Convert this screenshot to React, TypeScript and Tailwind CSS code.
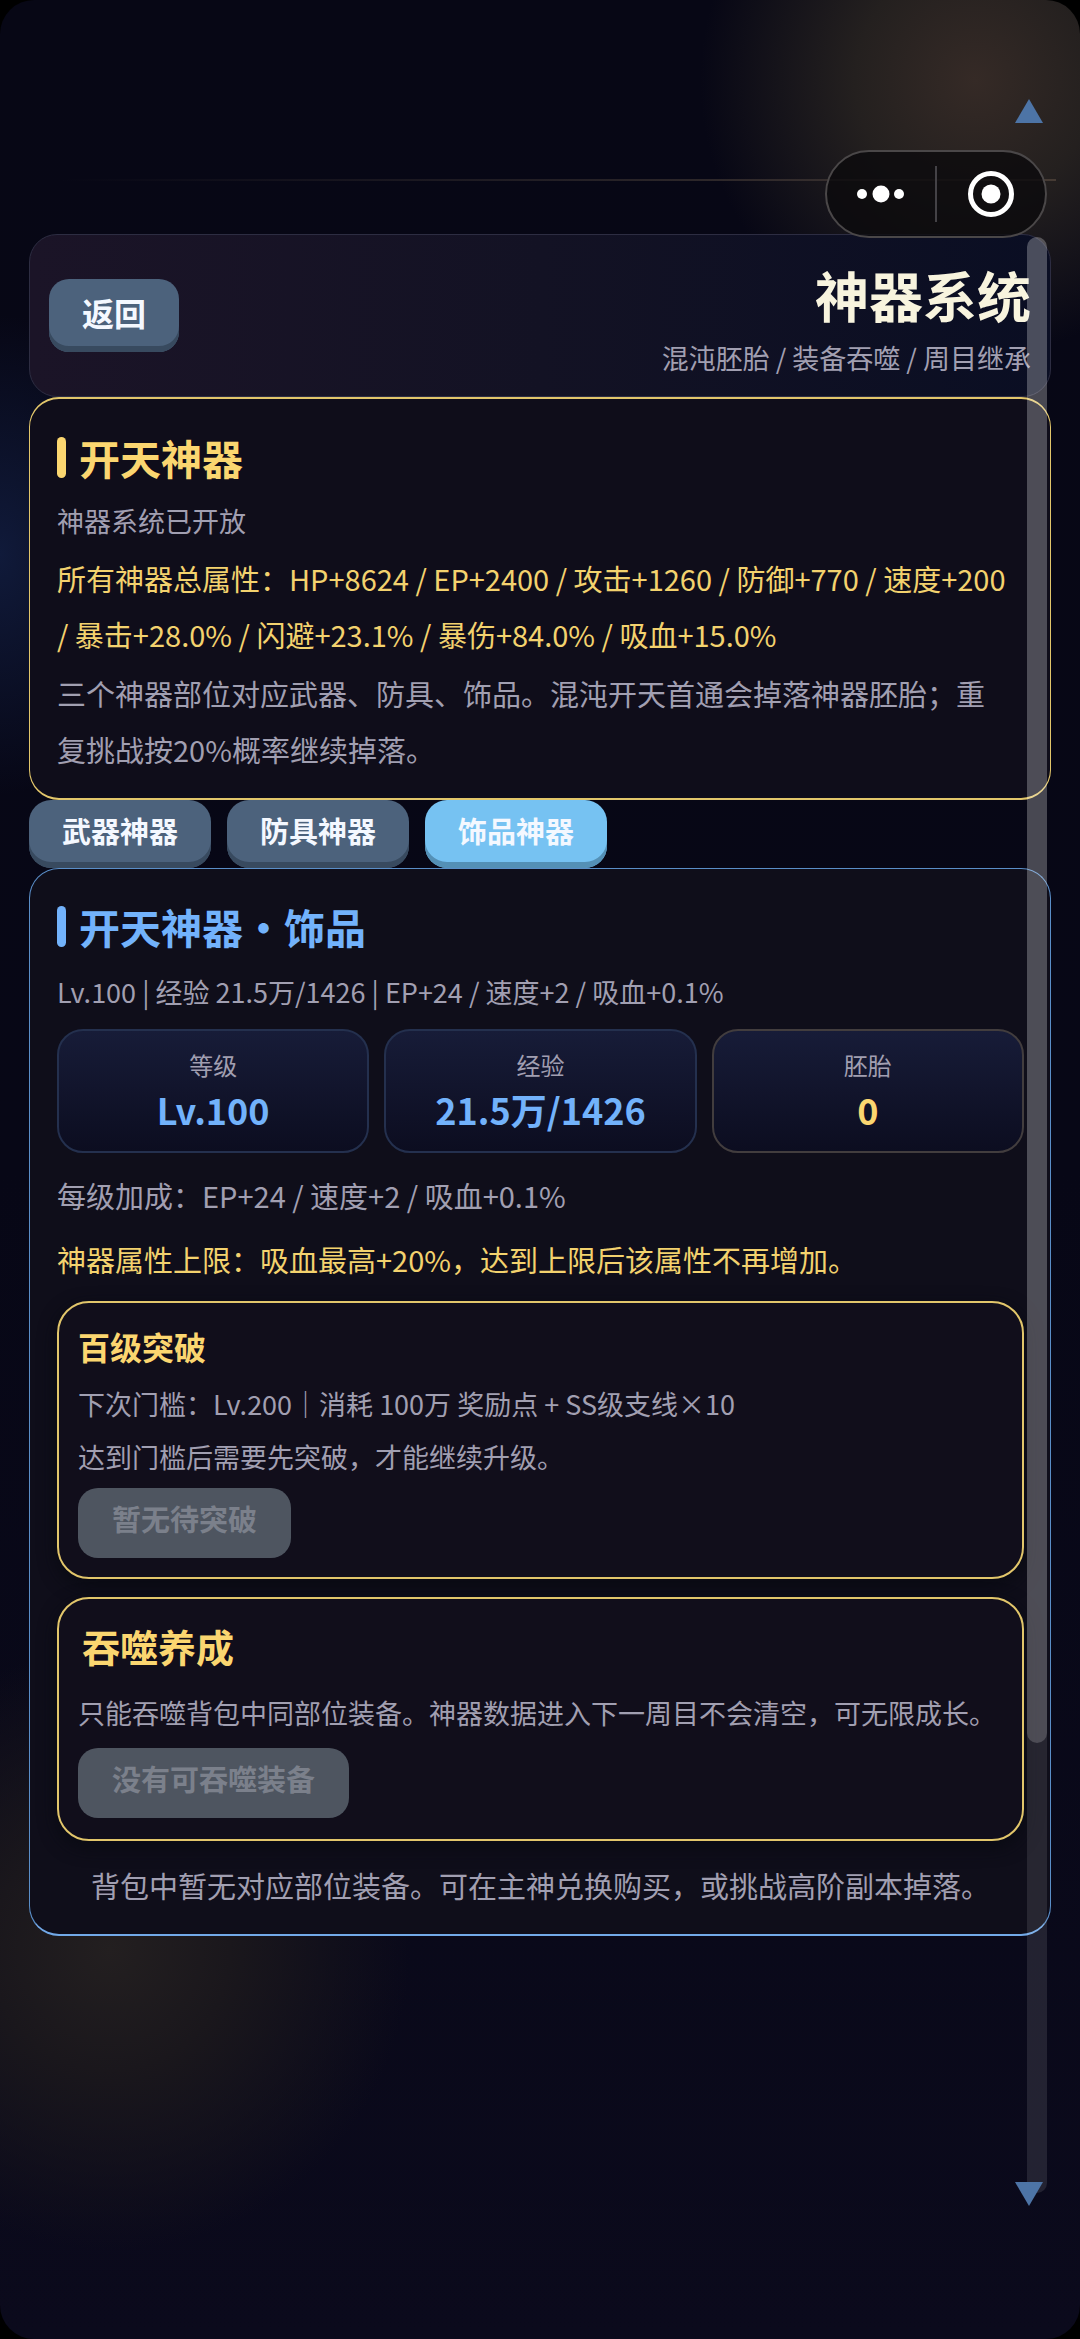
import type { ReactNode } from "react";
import clsx from "clsx";

const tabs = ["武器神器", "防具神器", "饰品神器"];

const stats = [
  { label: "等级", value: "Lv.100", gold: false },
  { label: "经验", value: "21.5万/1426", gold: false },
  { label: "胚胎", value: "0", gold: true },
];

const SectionTitle = ({ children, gold = false }: { children: ReactNode; gold?: boolean }) => (
  <h2
    className={clsx(
      "flex items-center gap-[13px] text-[41px] leading-[60px] font-bold",
      gold ? "text-[#fbd670]" : "text-[#72b2fb]"
    )}
  >
    <span className={clsx("w-[9px] h-[41px] rounded-full", gold ? "bg-[#fbd670]" : "bg-[#72b2fb]")} />
    {children}
  </h2>
);

const DisabledButton = ({ children }: { children: ReactNode }) => (
  <button
    type="button"
    disabled
    className="rounded-[20px] bg-[#4e5560] px-[34px] pt-[8px] pb-[17px] text-[29px] leading-[45px] font-bold text-[#7b808b]"
  >
    {children}
  </button>
);

const App = () => {
  return (
    <div className="bg-black">
      <div
        className="relative min-h-screen overflow-hidden rounded-[34px] bg-[#070714] bg-[radial-gradient(circle_at_975px_80px,#352a26_0px,#24201f_120px,transparent_275px),radial-gradient(circle_at_110px_1950px,#231f20_0px,#1a171c_120px,transparent_300px),radial-gradient(ellipse_150px_240px_at_0px_555px,#101a3a,transparent),linear-gradient(#070715,#070716_50%,#0b0a1c)] px-[29px] pt-[234px] pb-20 font-['Noto_Sans_CJK_SC','Noto_Sans',sans-serif]"
      >
        <div className="absolute top-[179px] left-[60px] right-6 h-[2px] bg-linear-to-r from-transparent via-[#231f25] to-[#463b34]" />

        {/* Header */}
        <header className="flex h-[163px] items-center justify-between rounded-[28px] border border-[#2d2d42] bg-linear-to-r from-[#1b1427] via-[#131224] to-[#0a0e23] px-[19px]">
          <button
            type="button"
            className="rounded-[20px] bg-[#4c627c] px-[33px] pt-[9px] pb-[16px] text-[32px] leading-[48px] font-bold text-[#f4f8ff] shadow-[inset_0_-6px_0_#384a5f]"
          >
            返回
          </button>
          <div className="text-right">
            <h1 className="text-[54px] leading-[72px] font-bold text-[#f8f4de]">神器系统</h1>
            <p className="mt-3 text-[27px] leading-[30px] text-[#a19fb1]">混沌胚胎 / 装备吞噬 / 周目继承</p>
          </div>
        </header>

        {/* Overview */}
        <section className="rounded-[30px] border-x border-y-2 border-[#e2c66b] bg-[#0f0d1a] px-[27px] pt-[28px] pb-[21px]">
          <SectionTitle gold>开天神器</SectionTitle>
          <p className="mt-[14px] text-[27px] leading-[40px] text-[#a19fb1]">神器系统已开放</p>
          <p className="mt-[9px] pr-4 text-[29px] leading-[56px] text-[#f3d26e]">
            所有神器总属性：HP+8624 / EP+2400 / 攻击+1260 / 防御+770 / 速度+200 / 暴击+28.0% / 闪避+23.1% / 暴伤+84.0% / 吸血+15.0%
          </p>
          <p className="mt-[3px] pr-4 text-[29px] leading-[56px] text-[#a19fb1]">
            三个神器部位对应武器、防具、饰品。混沌开天首通会掉落神器胚胎；重复挑战按20%概率继续掉落。
          </p>
        </section>

        {/* Slot tabs */}
        <nav className="flex gap-4">
          {tabs.map((tab) => (
            <button
              key={tab}
              type="button"
              className={clsx(
                "rounded-[22px] px-[33px] pt-[8px] pb-[15px] text-[29px] leading-[45px] font-bold text-[#f4f8ff]",
                tab === "饰品神器"
                  ? "bg-[#76c2f2] shadow-[inset_0_-6px_0_#5490b6]"
                  : "bg-[#4c627c] shadow-[inset_0_-6px_0_#384a5f]"
              )}
            >
              {tab}
            </button>
          ))}
        </nav>

        {/* Artifact detail */}
        <section className="rounded-[30px] border border-b-2 border-[#5a8ec8] border-b-[#72a9e8] bg-[#0f0e1a] pt-[27px] pr-[26px] pb-[21px] pl-[27px]">
          <SectionTitle>开天神器・饰品</SectionTitle>
          <p className="mt-4 text-[27px] leading-[40px] text-[#a19fb1]">
            Lv.100 | 经验 21.5万/1426 | EP+24 / 速度+2 / 吸血+0.1%
          </p>

          <div className="mt-[17px] grid grid-cols-3 gap-[15px]">
            {stats.map((stat) => (
              <div
                key={stat.label}
                className={clsx(
                  "rounded-[26px] border-2 bg-linear-to-b from-[#171c38] to-[#0c0d20] pt-[18px] pb-[18px] text-center",
                  stat.gold ? "border-[#423d3e]" : "border-[#24304e]"
                )}
              >
                <p className="text-[24px] leading-[32px] text-[#a19fb1]">{stat.label}</p>
                <p
                  className={clsx(
                    "mt-1 text-[36px] leading-[48px] font-bold",
                    stat.gold ? "text-[#fbd670]" : "text-[#72b2fb]"
                  )}
                >
                  {stat.value}
                </p>
              </div>
            ))}
          </div>

          <p className="mt-[14px] text-[29px] leading-[56px] text-[#a19fb1]">每级加成：EP+24 / 速度+2 / 吸血+0.1%</p>
          <p className="mt-2 text-[29px] leading-[56px] text-[#f3d26e]">
            神器属性上限：吸血最高+20%，达到上限后该属性不再增加。
          </p>

          <div className="mt-[14px] rounded-[32px] border-2 border-[#e2c66b] bg-[#110e1b] px-[19px] pt-[21px] pb-[19px] shadow-[0_6px_18px_#090a12]">
            <h3 className="text-[32px] leading-[44px] font-bold text-[#fbd670]">百级突破</h3>
            <div className="mt-[9px] mb-[5px] text-[27px] leading-[53px] text-[#a19fb1]">
              <p>下次门槛：Lv.200｜消耗 100万 奖励点 + SS级支线×10</p>
              <p>达到门槛后需要先突破，才能继续升级。</p>
            </div>
            <DisabledButton>暂无待突破</DisabledButton>
          </div>

          <div className="mt-[18px] rounded-[32px] border-2 border-[#e2c66b] bg-[#110e1b] px-[19px] pt-[23px] pb-[21px] shadow-[0_6px_18px_#090a12]">
            <h3 className="pl-1 text-[38px] leading-[48px] font-bold text-[#fbd670]">吞噬养成</h3>
            <p className="mt-4 mb-[9px] text-[27px] leading-[53px] text-[#a19fb1]">
              只能吞噬背包中同部位装备。神器数据进入下一周目不会清空，可无限成长。
            </p>
            <DisabledButton>没有可吞噬装备</DisabledButton>
          </div>

          <p className="mt-4 text-center text-[29px] leading-[56px] text-[#a19fb1]">
            背包中暂无对应部位装备。可在主神兑换购买，或挑战高阶副本掉落。
          </p>
        </section>

        {/* Scrollbar */}
        <div className="absolute top-[237px] right-[33px] bottom-[146px] w-5 rounded-full bg-white/10">
          <div className="h-[77%] rounded-full bg-white/18" />
        </div>
        <svg className="absolute top-[99px] right-[37px]" width="28" height="24" viewBox="0 0 28 24">
          <path d="M14 0 L28 24 H0 Z" fill="#4d74a6" />
        </svg>
        <svg className="absolute right-[37px] bottom-[133px]" width="28" height="24" viewBox="0 0 28 24">
          <path d="M0 0 H28 L14 24 Z" fill="#4d74a6" />
        </svg>

        {/* Mini program capsule */}
        <div className="absolute top-[150px] right-[33px] flex h-[88px] w-[222px] items-center rounded-full border-2 border-[#4a4748] bg-[#0b0a0d]/80">
          <button type="button" aria-label="更多" className="flex flex-1 justify-center">
            <svg width="48" height="20" viewBox="0 0 48 20" fill="#fff">
              <circle cx="5" cy="10" r="5" />
              <circle cx="24" cy="10" r="8.5" />
              <circle cx="42" cy="10" r="5" />
            </svg>
          </button>
          <span className="h-[56px] w-[2px] bg-[#444246]" />
          <button type="button" aria-label="关闭" className="flex flex-1 justify-center">
            <svg width="48" height="48" viewBox="0 0 48 48">
              <circle cx="24" cy="24" r="20.5" fill="none" stroke="#fff" strokeWidth="5" />
              <circle cx="24" cy="24" r="9.5" fill="#fff" />
            </svg>
          </button>
        </div>
      </div>
    </div>
  );
};

export default App;
